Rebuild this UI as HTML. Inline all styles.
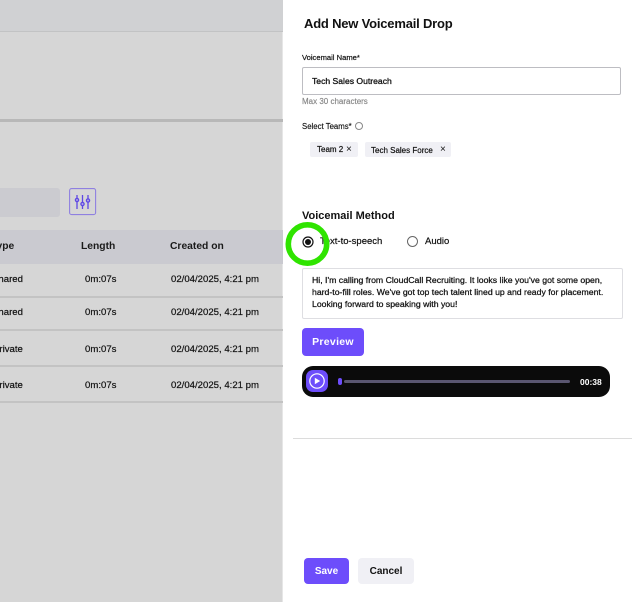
<!DOCTYPE html>
<html><head><meta charset="utf-8">
<style>
html,body{margin:0;padding:0}
body{width:632px;height:602px;position:relative;overflow:hidden;background:#fff;font-family:"Liberation Sans",sans-serif;color:#111}
.a{position:absolute;white-space:nowrap}
.l{background:#c3c3c3;left:0;width:283px;height:2px}
.c{font-size:9.6px;color:#111;line-height:12px;-webkit-text-stroke:.2px #111}
.h{font-size:10.3px;font-weight:bold;line-height:14px;color:#1a1a1a}
</style></head><body>
<div class="a" style="left:0;top:0;width:283px;height:602px;background:#d6d6d6"></div>
<div class="a" style="left:282px;top:0;width:1px;height:602px;background:#e6e6e6"></div>
<div class="a" style="left:0;top:0;width:283px;height:31px;background:#d0d1d3"></div>
<div class="a" style="left:0;top:31px;width:283px;height:1px;background:#c2c3c4"></div>
<div class="a" style="left:0;top:119px;width:283px;height:3px;background:#b8b8b8"></div>
<div class="a" style="left:0;top:188px;width:60px;height:29px;background:#cbcbd0;border-radius:0 3px 3px 0"></div>
<svg class="a" style="left:69px;top:188px" width="28" height="28" viewBox="0 0 28 28" fill="none">
<rect x=".6" y=".6" width="26" height="26" rx="2" stroke="#8f80e0" stroke-width="1.1"/>
<g stroke="#5f48e4" stroke-width="1.3"><path d="M8 7v14M13.5 7v14M19 7v14"/>
<circle cx="8" cy="12" r="1.6" fill="#b5aee4"/><circle cx="13.5" cy="16" r="1.6" fill="#b5aee4"/><circle cx="19" cy="12.5" r="1.6" fill="#b5aee4"/></g></svg>
<div class="a" style="left:0;top:230px;width:283px;height:34px;background:#cacad0"></div>
<div class="a h" style="left:-9px;top:240px;">Type</div>
<div class="a h" style="left:81px;top:240px">Length</div>
<div class="a h" style="left:170px;top:240px">Created on</div>
<div class="a c" style="left:-8px;top:274px">Shared</div><div class="a c" style="left:85px;top:274px">0m:07s</div><div class="a c" style="left:171px;top:274px">02/04/2025, 4:21 pm</div>
<div class="a l" style="top:296px"></div>
<div class="a c" style="left:-8px;top:307px">Shared</div><div class="a c" style="left:85px;top:307px">0m:07s</div><div class="a c" style="left:171px;top:307px">02/04/2025, 4:21 pm</div>
<div class="a l" style="top:329px"></div>
<div class="a c" style="left:-7px;top:344px">Private</div><div class="a c" style="left:85px;top:344px">0m:07s</div><div class="a c" style="left:171px;top:344px">02/04/2025, 4:21 pm</div>
<div class="a l" style="top:365px"></div>
<div class="a c" style="left:-7px;top:380px">Private</div><div class="a c" style="left:85px;top:380px">0m:07s</div><div class="a c" style="left:171px;top:380px">02/04/2025, 4:21 pm</div>
<div class="a l" style="top:401px"></div>

<div class="a" style="left:304px;top:15px;font-size:13px;font-weight:bold;line-height:18px;letter-spacing:-.2px;color:#111">Add New Voicemail Drop</div>
<div class="a" style="left:302px;top:53px;font-size:7.6px;line-height:10px;-webkit-text-stroke:.2px #111">Voicemail Name*</div>
<div class="a" style="left:302px;top:67px;width:317px;height:26px;border:1px solid #bdbdc2;border-radius:2px;background:#fff"></div>
<div class="a" style="left:312px;top:75px;font-size:8.6px;line-height:13px;-webkit-text-stroke:.3px #111">Tech Sales Outreach</div>
<div class="a" style="left:302px;top:97px;font-size:8px;line-height:10px;color:#858585;-webkit-text-stroke:.15px #858585">Max 30 characters</div>
<div class="a" style="left:302px;top:122px;font-size:7.8px;line-height:10px;-webkit-text-stroke:.15px #111">Select Teams*</div>
<div class="a" style="left:355px;top:122px;width:6px;height:6px;border:1px solid #888;border-radius:50%"></div>
<div class="a" style="left:310px;top:142px;width:48px;height:15px;background:#f0f0f5;border-radius:2px"></div>
<div class="a" style="left:317px;top:144px;font-size:8px;line-height:11px;-webkit-text-stroke:.2px #111">Team 2</div>
<div class="a" style="left:346px;top:144px;font-size:10px;line-height:12px">×</div>
<div class="a" style="left:365px;top:142px;width:86px;height:15px;background:#f0f0f5;border-radius:2px"></div>
<div class="a" style="left:371px;top:145px;font-size:8px;line-height:11px;-webkit-text-stroke:.2px #111">Tech Sales Force</div>
<div class="a" style="left:440px;top:144px;font-size:10px;line-height:12px">×</div>

<div class="a" style="left:302px;top:209px;font-size:11px;font-weight:bold;line-height:14px;color:#111">Voicemail Method</div>
<div class="a" style="left:320px;top:236px;font-size:9.5px;line-height:12px;-webkit-text-stroke:.2px #111">Text-to-speech</div>
<div class="a" style="left:425px;top:236px;font-size:9.5px;line-height:12px;-webkit-text-stroke:.2px #111">Audio</div>
<div class="a" style="left:407px;top:236px;width:9px;height:9px;border:1px solid #666;border-radius:50%"></div>
<svg class="a" style="left:284px;top:220px" width="48" height="48" viewBox="0 0 48 48" fill="none">
<circle cx="24" cy="22" r="5" stroke="#111" stroke-width="1.2"/><circle cx="24" cy="22" r="3" fill="#111"/>
<circle cx="23.5" cy="24" r="19.2" stroke="#2fe400" stroke-width="5.6"/></svg>

<div class="a" style="left:302px;top:268px;width:319px;height:49px;border:1px solid #dedee2;border-radius:2px;background:#fff"></div>
<div class="a" style="left:312px;top:274px;font-size:8.7px;line-height:12.2px;color:#111;-webkit-text-stroke:.25px #111">Hi, I'm calling from CloudCall Recruiting. It looks like you've got some open,<br>hard-to-fill roles. We've got top tech talent lined up and ready for placement.<br>Looking forward to speaking with you!</div>

<div class="a" style="left:302px;top:328px;width:62px;height:28px;background:#6d4dfb;border-radius:4px;color:#fff;font-size:10.5px;font-weight:bold;line-height:29px;text-align:center;letter-spacing:.3px">Preview</div>

<div class="a" style="left:302px;top:366px;width:308px;height:31px;background:#0b0b0b;border-radius:11px"></div>
<div class="a" style="left:306px;top:370px;width:22px;height:22px;background:#6d4dfb;border-radius:7px"></div>
<svg class="a" style="left:306px;top:370px" width="22" height="22" viewBox="0 0 22 22" fill="none"><circle cx="11" cy="11" r="7.2" stroke="#fff" stroke-width="1.2"/><path d="M8.8 7.8l5.4 3.2-5.4 3.2z" fill="#fff"/></svg>
<div class="a" style="left:338px;top:378px;width:4px;height:7px;background:#6d4dfb;border-radius:2px"></div>
<div class="a" style="left:344px;top:380px;width:226px;height:3px;background:#5a5670;border-radius:2px"></div>
<div class="a" style="left:580px;top:376px;font-size:8.5px;font-weight:bold;line-height:12px;color:#fff">00:38</div>

<div class="a" style="left:293px;top:438px;width:339px;height:1px;background:#dcdcdc"></div>
<div class="a" style="left:304px;top:558px;width:45px;height:26px;background:#6d4dfb;border-radius:4px;color:#fff;font-size:10px;font-weight:bold;line-height:28px;text-align:center">Save</div>
<div class="a" style="left:358px;top:558px;width:56px;height:26px;background:#f0f0f5;border-radius:4px;color:#111;font-size:10px;font-weight:bold;line-height:28px;text-align:center">Cancel</div>
</body></html>
